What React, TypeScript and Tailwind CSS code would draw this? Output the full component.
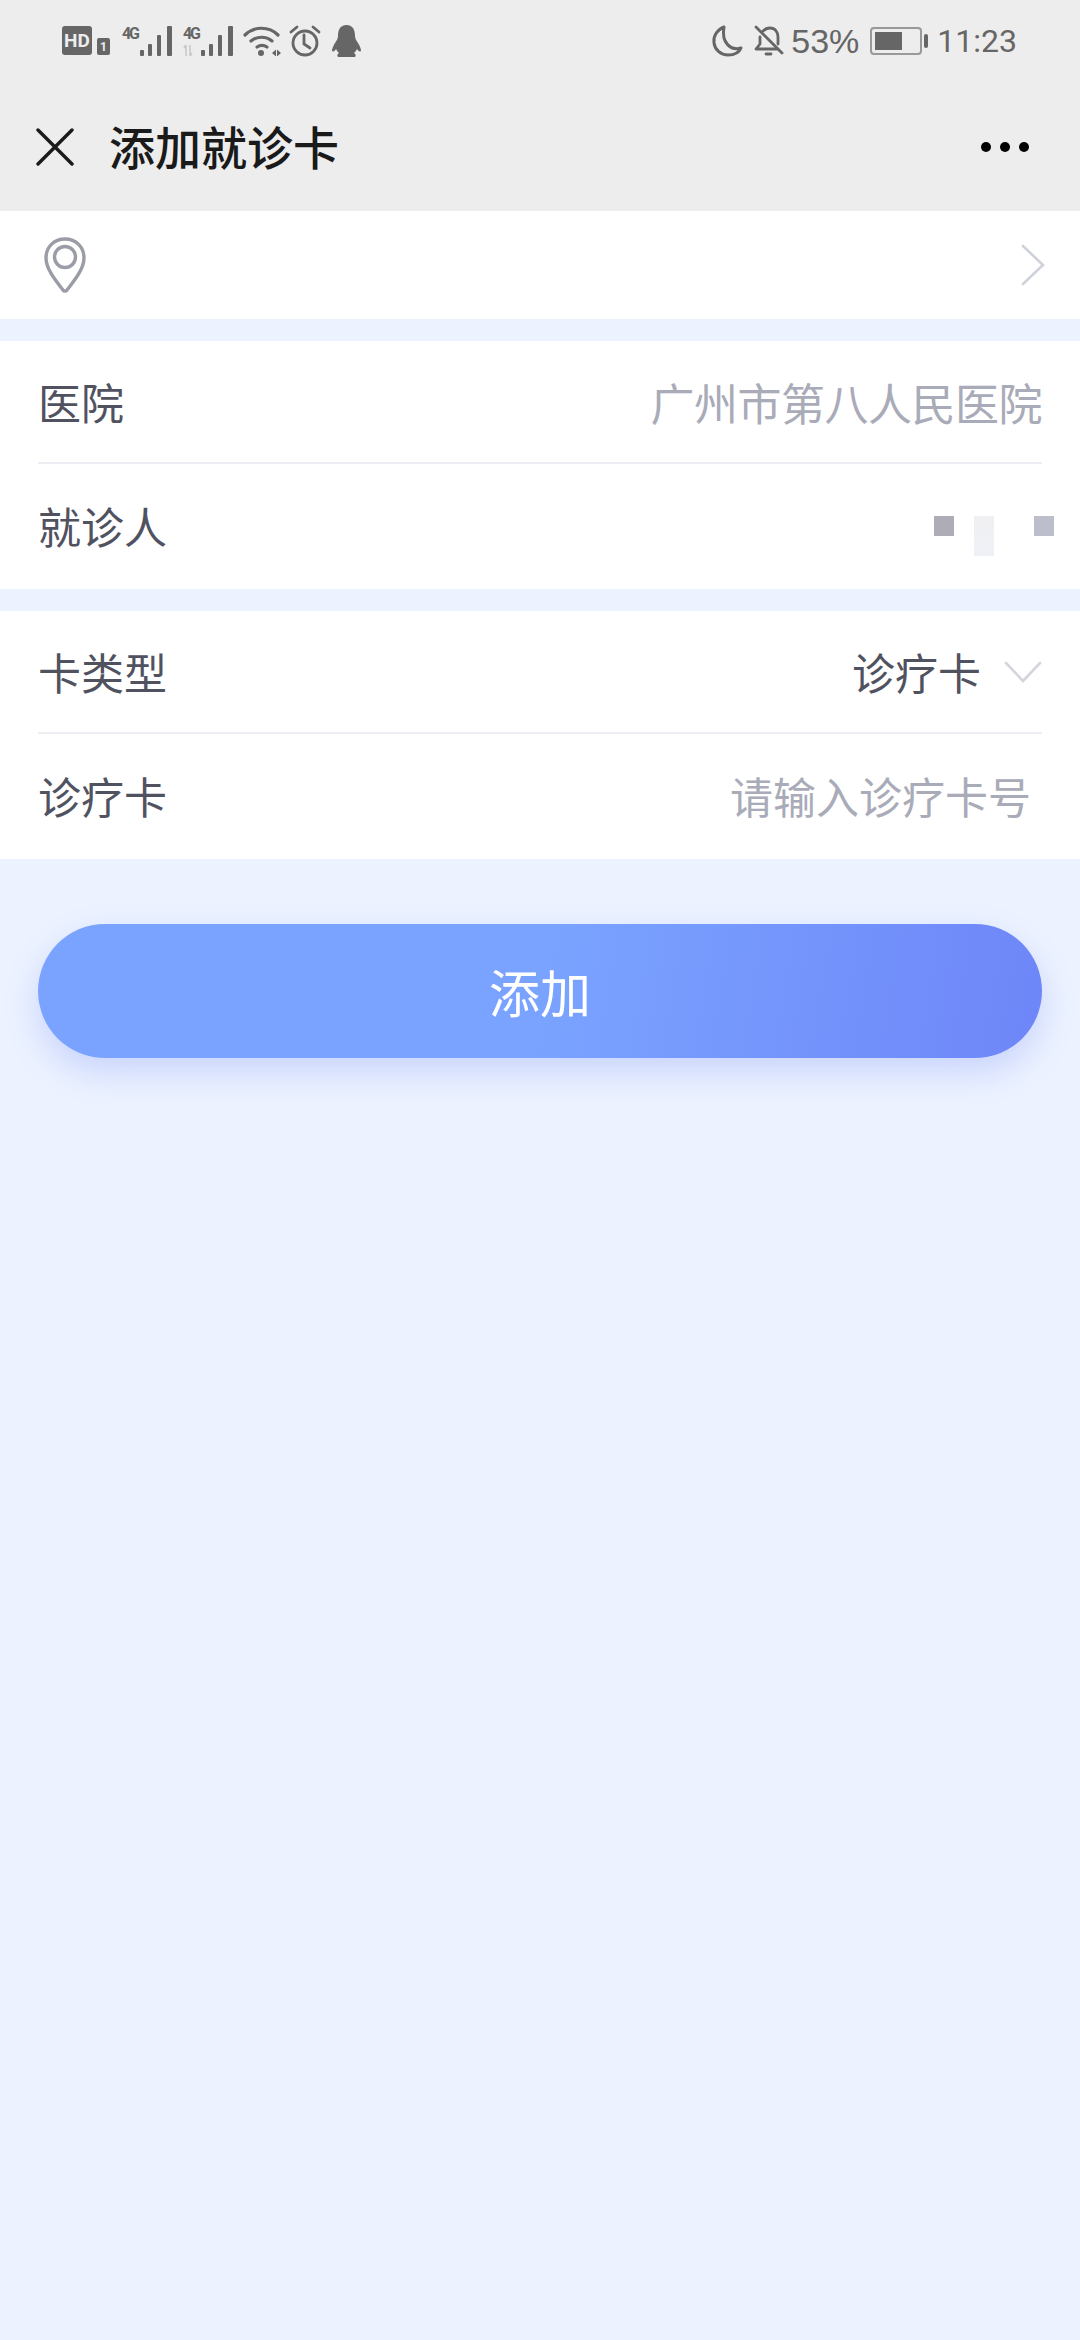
import React from 'react'

const CJK = "font-['Noto_Sans_CJK_SC','Noto_Sans',sans-serif]"

function SignalIcon({ updown }: { updown?: boolean }) {
  return (
    <svg width="52" height="32" viewBox="0 0 52 32" fill="#666">
      <text x="0" y="14" fontSize="16" fontWeight="700" fontFamily="Roboto, sans-serif" textLength="18">4G</text>
      {updown && (
        <g stroke="#c8c8c8" strokeWidth="1.6" fill="none">
          <path d="M3 31V20M3 20l-2 3M7 20v11M7 31l2-3" />
        </g>
      )}
      <rect x="18" y="25" width="4" height="6" rx="1" />
      <rect x="26" y="19" width="4" height="12" rx="1" />
      <rect x="35" y="10" width="4" height="21" rx="1" />
      <rect x="45" y="1" width="5" height="30" rx="1" />
    </svg>
  )
}

function StatusBar() {
  return (
    <div className="flex h-[84px] items-center justify-between pb-[3px] pl-[62px] pr-[63px] text-[#666]">
      <div className="flex items-center">
        <div className="flex h-[29px] w-[30px] items-center justify-center rounded-[3px] bg-[#666] font-['Roboto',sans-serif] text-[19px] font-bold leading-none text-[#ededed]">
          HD
        </div>
        <div className="ml-[5px] mt-[12px] flex h-[17px] w-[13px] items-center justify-center rounded-[2px] bg-[#666] font-['Roboto',sans-serif] text-[12px] font-bold leading-none text-[#ededed]">
          1
        </div>
        <div className="ml-[12px]"><SignalIcon /></div>
        <div className="ml-[9px]"><SignalIcon updown /></div>
        <svg className="ml-[8px]" width="38" height="30" viewBox="0 0 38 30" fill="none" stroke="#666" strokeWidth="3.2" strokeLinecap="round">
          <path d="M2 9C11 0 26 0 35 9" />
          <path d="M8 15c6-5 15-5 21 0" />
          <path d="M14 21c3-2 7-2 10 0" />
          <circle cx="18" cy="27" r="3" fill="#666" stroke="none" />
          <path d="M29 27l4-3.500v7zM34 23.500l4 3.500-4 3.500z" fill="#666" stroke="none" />
        </svg>
        <svg className="ml-[8px]" width="32" height="32" viewBox="0 0 32 32" fill="none" stroke="#666" strokeWidth="2.8" strokeLinecap="round">
          <circle cx="16" cy="18" r="12" />
          <path d="M15 10v9l6 4" />
          <path d="M2 7l6-5M30 7l-6-5" />
        </svg>
        <svg className="ml-[11px]" width="29" height="32" viewBox="0 0 29 32" fill="#666">
          <path d="M14.500 0C8 0 6 5 6 11c0 2-1 4-3 7-2 3-3 6-3 8 1 1 3 0 4-2 1 2 2 3 3 4-2 1-2 3-1 4h17c1-1 1-3-1-4 1-1 2-2 3-4 1 2 3 3 4 2 0-2-1-5-3-8-2-3-3-5-3-7 0-6-2-11-8.500-11z" />
        </svg>
      </div>
      <div className="flex items-center">
        <svg width="32" height="32" viewBox="0 0 32 32" fill="none" stroke="#666" strokeWidth="3" strokeLinejoin="round">
          <path d="M13 2C6 5 2 11 3 18c1 7 7 12 14 12 6 0 11-2 13-7-10 3-20-5-17-21z" />
        </svg>
        <svg className="ml-[11px]" width="30" height="32" viewBox="0 0 30 32" fill="none" stroke="#666" strokeWidth="2.8" strokeLinecap="round" strokeLinejoin="round">
          <path d="M9 6c2-2 4-3 7-3 5 0 8 4 8 9v7M6 12v7l-4 5h21" />
          <path d="M12 29h5" />
          <path d="M2 2l26 26" />
        </svg>
        <span className="ml-[7px] font-['Liberation_Sans',sans-serif] text-[34px] leading-none">53%</span>
        <div className="ml-[11px] flex h-[28px] w-[52px] items-center rounded-[4px] border-2 border-[#999] p-[3px]">
          <div className="h-full w-[27px] bg-[#666]" />
        </div>
        <div className="ml-[2px] h-[14px] w-[4px] rounded-sm bg-[#666]" />
        <span className="ml-[9px] font-['Roboto',sans-serif] text-[32px] leading-none">11:23</span>
      </div>
    </div>
  )
}

function NavBar() {
  return (
    <div className="flex h-[127px] items-center justify-between pb-[2px] pl-[36px] pr-[51px]">
      <div className="flex items-center">
        <svg width="38" height="38" viewBox="0 0 38 38" stroke="#1a1a1a" strokeWidth="3.4" strokeLinecap="round">
          <path d="M2 2l34 34M36 2L2 36" />
        </svg>
        <h1 className="-mt-[3px] ml-[35px] text-[46px] font-medium leading-none text-[#1a1a1a]">添加就诊卡</h1>
      </div>
      <div className="flex gap-[9px]">
        <div className="h-[10px] w-[10px] rounded-full bg-black" />
        <div className="h-[10px] w-[10px] rounded-full bg-black" />
        <div className="h-[10px] w-[10px] rounded-full bg-black" />
      </div>
    </div>
  )
}

function Row({ label, children, first }: { label: string; children: React.ReactNode; first?: boolean }) {
  return (
    <div className={first ? 'flex h-[123px] items-center justify-between border-b-2 border-[#eceef3]' : 'flex h-[125px] items-center justify-between pb-[3px]'}>
      <span className="text-[43px] leading-none text-[#50535f]">{label}</span>
      {children}
    </div>
  )
}

export default function App() {
  return (
    <div className={`flex min-h-[2340px] w-[1080px] flex-col bg-[#ecf2ff] ${CJK}`}>
      <div className="bg-[#ededed]">
        <StatusBar />
        <NavBar />
      </div>

      <div className="flex h-[108px] items-center justify-between bg-white pl-[44px] pr-[35px]">
        <svg width="42" height="56" viewBox="0 0 42 56" fill="none" stroke="#9a9ca6" strokeWidth="3.4">
          <path d="M21 2C10 2 2 10 2 21c0 11 10 23 17 32 1 1.500 3 1.500 4 0 7-9 17-21 17-32C40 10 32 2 21 2z" />
          <circle cx="21" cy="20" r="10.500" />
        </svg>
        <svg width="24" height="42" viewBox="0 0 24 42" fill="none" stroke="#cfd2da" strokeWidth="2.6" strokeLinecap="round">
          <path d="M2 2l20 19L2 40" />
        </svg>
      </div>

      <div className="mt-[22px] bg-white px-[38px]">
        <Row label="医院" first>
          <span className="text-[44px] leading-none tracking-[-0.5px] text-[#a9abb8]">广州市第八人民医院</span>
        </Row>
        <Row label="就诊人">
          <div className="mr-[-12px] flex items-start pt-[22px]">
            <div className="h-[20px] w-[20px] bg-[#aeacb6]" />
            <div className="ml-[20px] h-[40px] w-[20px] bg-gradient-to-b from-[#f0f0f2] to-[#eff1f7]" />
            <div className="ml-[40px] h-[20px] w-[20px] bg-[#bcbfcb]" />
          </div>
        </Row>
      </div>

      <div className="mt-[22px] bg-white px-[38px]">
        <Row label="卡类型" first>
          <div className="flex items-center">
            <span className="text-[43px] leading-none text-[#50535f]">诊疗卡</span>
            <svg className="ml-[23px]" width="38" height="22" viewBox="0 0 38 22" fill="none" stroke="#d3d6dd" strokeWidth="2.6" strokeLinecap="round">
              <path d="M2 2l17 18L36 2" />
            </svg>
          </div>
        </Row>
        <Row label="诊疗卡">
          <span className="mr-[11px] text-[43px] leading-none text-[#a9abb8]">请输入诊疗卡号</span>
        </Row>
      </div>

      <button
        type="button"
        className="mx-[38px] mt-[65px] flex h-[134px] items-center justify-center rounded-[67px] bg-[linear-gradient(100deg,#7aa3ff_0%,#7aa3ff_50%,#6e86f8_100%)] text-[51px] leading-none text-white shadow-[0_14px_32px_rgba(110,135,245,0.28)]"
      >
        添加
      </button>
    </div>
  )
}
